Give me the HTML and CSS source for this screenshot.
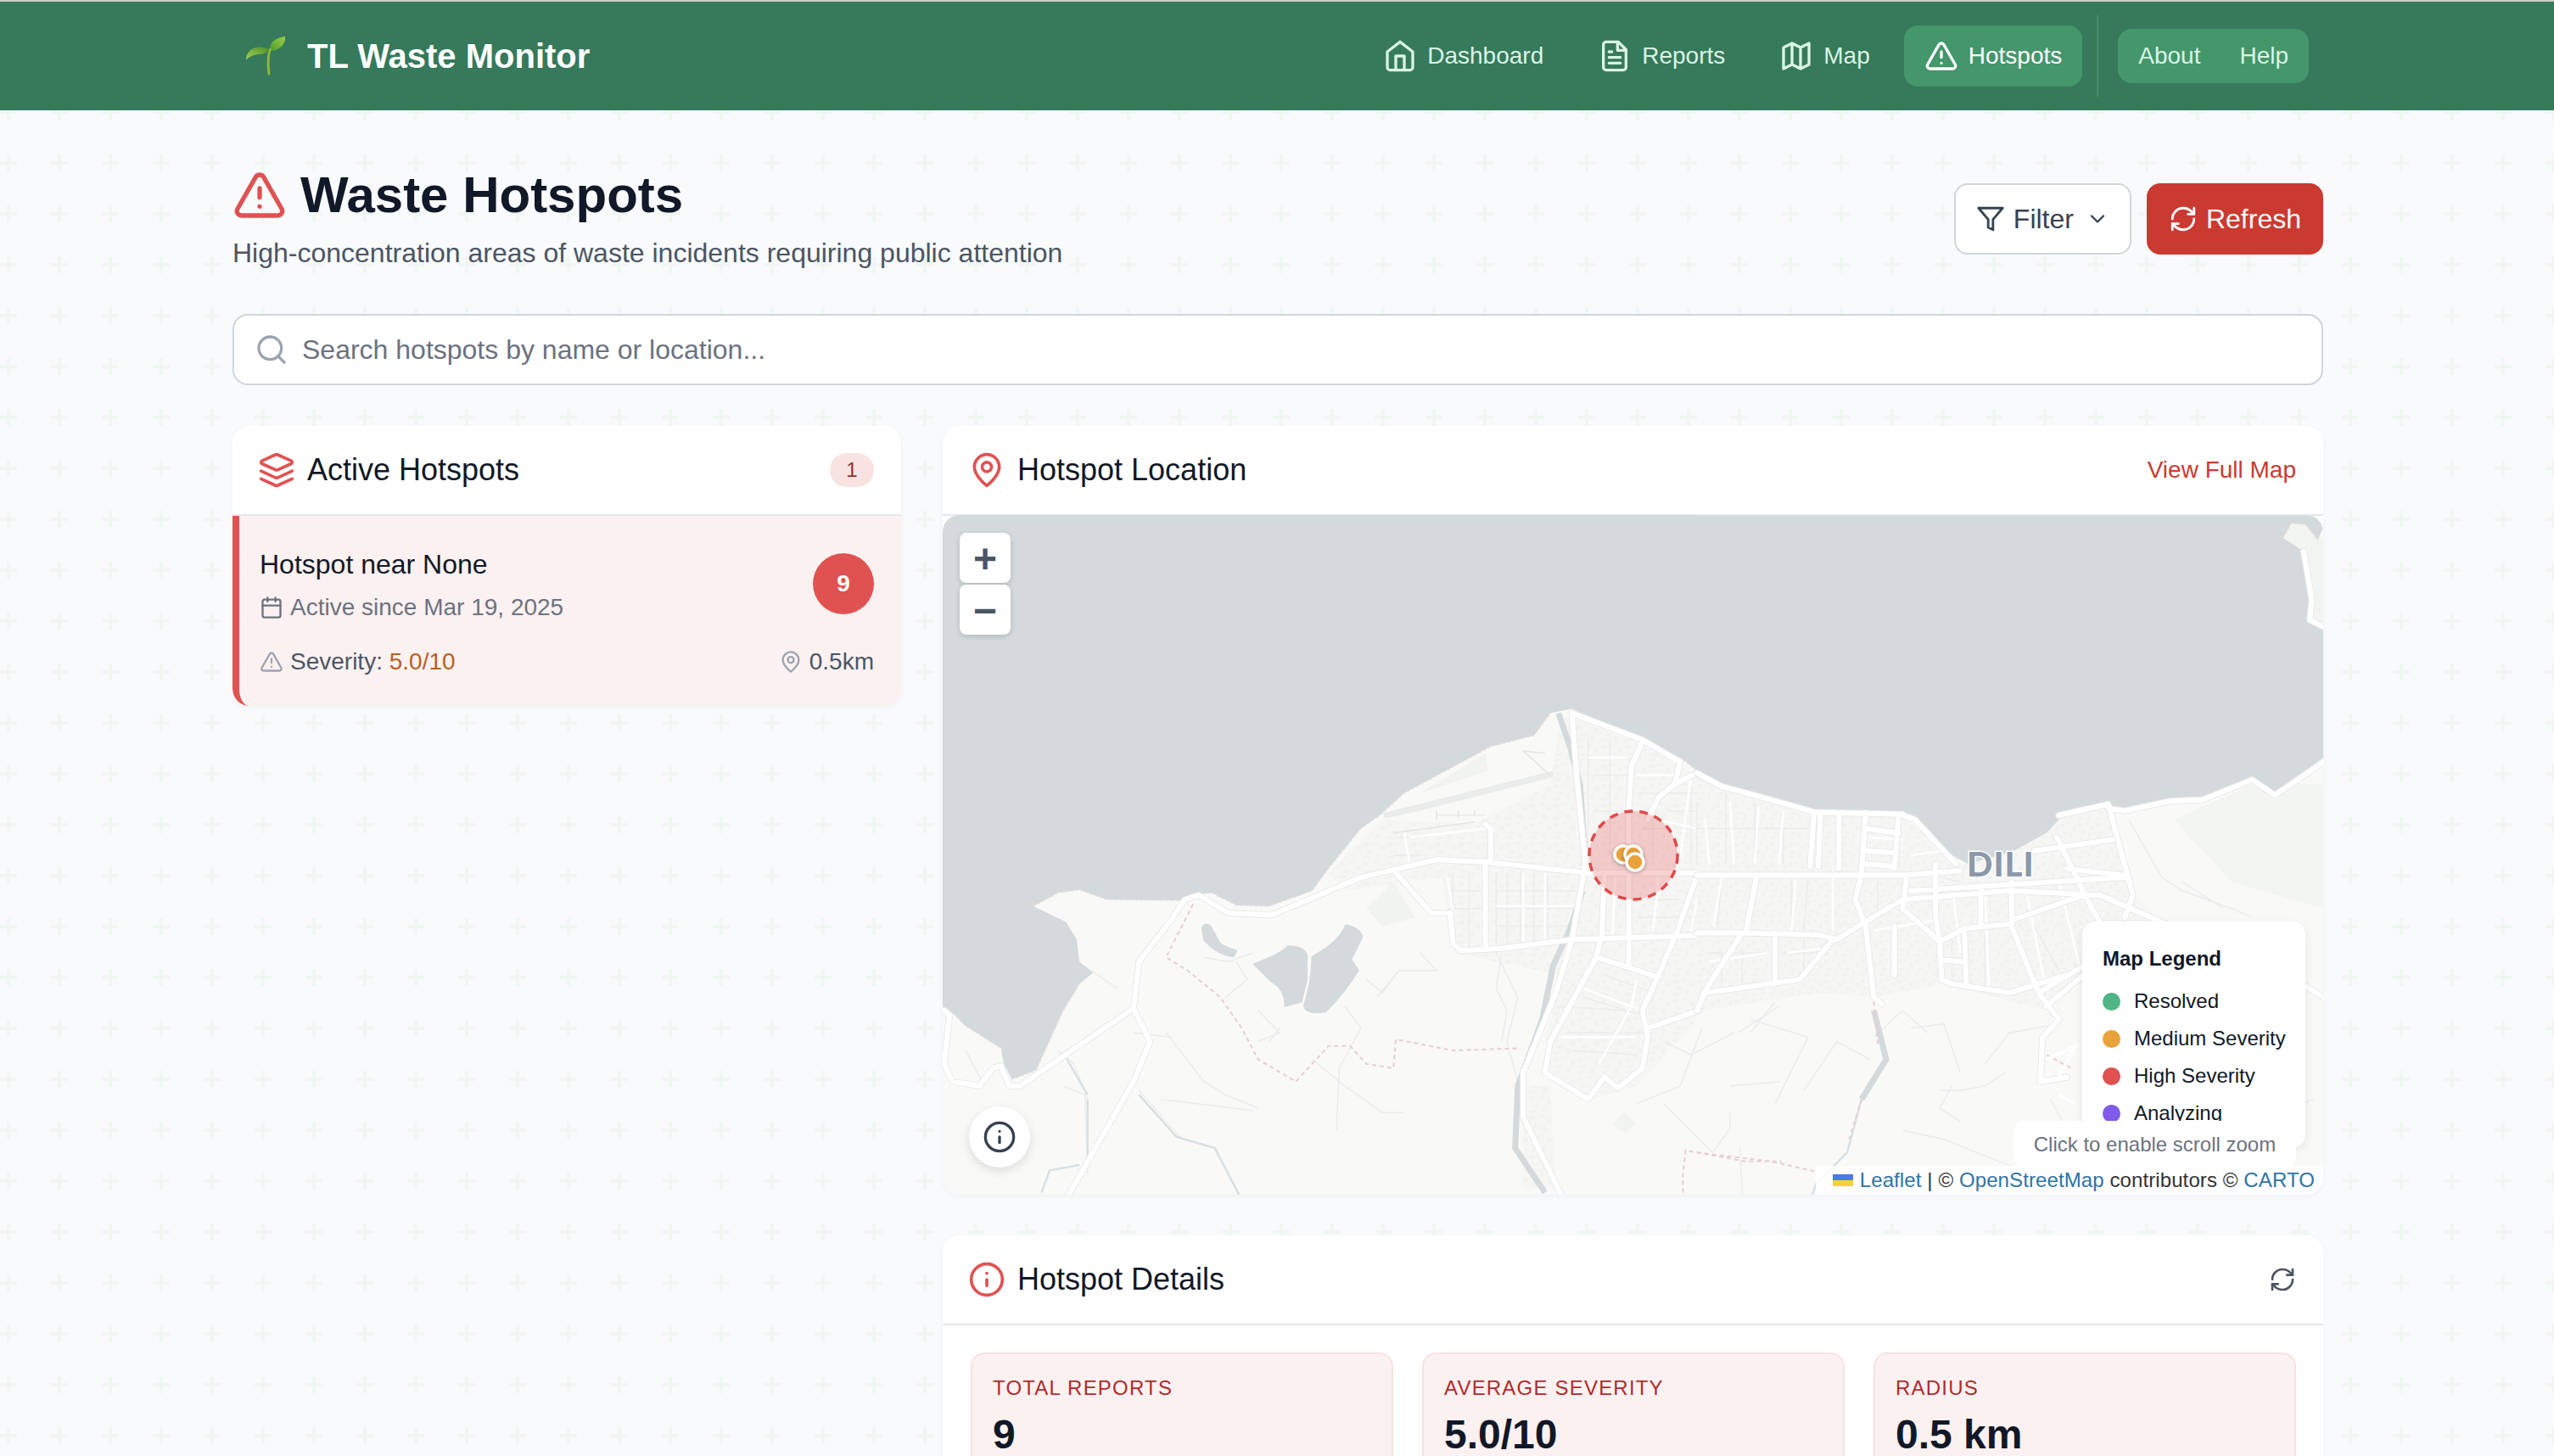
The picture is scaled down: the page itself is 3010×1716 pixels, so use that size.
FILE: index.html
```html
<!DOCTYPE html>
<html lang="en">
<head>
<meta charset="utf-8">
<title>Waste Hotspots</title>
<link rel="stylesheet" href="styles.css">
</head>
<body>
<svg class="sprite" aria-hidden="true">
  <defs>
    <symbol id="i-home" viewBox="0 0 24 24"><path d="m3 9 9-7 9 7v11a2 2 0 0 1-2 2H5a2 2 0 0 1-2-2z"/><path d="M9 22V12h6v10"/></symbol>
    <symbol id="i-file" viewBox="0 0 24 24"><path d="M14.5 2H6a2 2 0 0 0-2 2v16a2 2 0 0 0 2 2h12a2 2 0 0 0 2-2V7.5L14.5 2z"/><path d="M14 2v6h6M16 13H8M16 17H8M10 9H8"/></symbol>
    <symbol id="i-map" viewBox="0 0 24 24"><path d="M3 6l6-3 6 3 6-3v15l-6 3-6-3-6 3zM9 3v15M15 6v15"/></symbol>
    <symbol id="i-alert" viewBox="0 0 24 24"><path d="m21.73 18-8-14a2 2 0 0 0-3.48 0l-8 14A2 2 0 0 0 4 21h16a2 2 0 0 0 1.73-3Z"/><path d="M12 9v4M12 17h.01"/></symbol>
    <symbol id="i-filter" viewBox="0 0 24 24"><path d="M22 3H2l8 9.46V19l4 2v-8.54z"/></symbol>
    <symbol id="i-chev" viewBox="0 0 24 24"><path d="m6 9 6 6 6-6"/></symbol>
    <symbol id="i-refresh" viewBox="0 0 24 24"><path d="M3 12a9 9 0 0 1 9-9 9.75 9.75 0 0 1 6.74 2.74L21 8"/><path d="M21 3v5h-5"/><path d="M21 12a9 9 0 0 1-9 9 9.75 9.75 0 0 1-6.74-2.74L3 16"/><path d="M8 16H3v5"/></symbol>
    <symbol id="i-search" viewBox="0 0 24 24"><circle cx="11" cy="11" r="8"/><path d="m21 21-4.3-4.3"/></symbol>
    <symbol id="i-layers" viewBox="0 0 24 24"><path d="M12.83 2.18a2 2 0 0 0-1.66 0L2.6 6.08a1 1 0 0 0 0 1.83l8.58 3.91a2 2 0 0 0 1.66 0l8.58-3.9a1 1 0 0 0 0-1.83Z"/><path d="m22 17.65-9.17 4.16a2 2 0 0 1-1.66 0L2 17.65"/><path d="m22 12.65-9.17 4.16a2 2 0 0 1-1.66 0L2 12.65"/></symbol>
    <symbol id="i-pin" viewBox="0 0 24 24"><path d="M20 10c0 6-8 12-8 12s-8-6-8-12a8 8 0 0 1 16 0Z"/><circle cx="12" cy="10" r="3"/></symbol>
    <symbol id="i-cal" viewBox="0 0 24 24"><rect x="3" y="4" width="18" height="18" rx="2"/><path d="M16 2v4M8 2v4M3 10h18"/></symbol>
    <symbol id="i-info" viewBox="0 0 24 24"><circle cx="12" cy="12" r="10"/><path d="M12 16v-4M12 8h.01"/></symbol>
  </defs>
</svg>

<header class="nav">
  <div class="brand">
    <svg class="sprout" viewBox="0 0 48 46">
      <defs>
        <linearGradient id="leafA" x1="0" y1="1" x2="1" y2="0"><stop offset="0" stop-color="#4f9a2a"/><stop offset="1" stop-color="#9ad04a"/></linearGradient>
        <linearGradient id="leafB" x1="0" y1="1" x2="1" y2="0"><stop offset="0" stop-color="#a8d456"/><stop offset="1" stop-color="#4c8f28"/></linearGradient>
      </defs>
      <path class="sprout-stem" d="M27 44C26 36 26 26 27 20 28 15 30 13 33 11"/>
      <path fill="url(#leafA)" d="M46 0C38 1 30 5 29 10 28 13 30 16 32 17 40 15 47 9 46 0Z"/>
      <path fill="url(#leafB)" d="M0 28C0 20 5 14 12 13 18 12 23 13 27 15 25 19 20 21 14 21 8 22 3 24 0 28Z"/>
    </svg>
    <span class="brand-name">TL Waste Monitor</span>
  </div>
  <nav class="nav-right">
    <a class="nav-item"><svg class="ic ic-nav"><use href="#i-home"/></svg>Dashboard</a>
    <a class="nav-item"><svg class="ic ic-nav"><use href="#i-file"/></svg>Reports</a>
    <a class="nav-item"><svg class="ic ic-nav"><use href="#i-map"/></svg>Map</a>
    <a class="nav-item nav-active"><svg class="ic ic-nav"><use href="#i-alert"/></svg>Hotspots</a>
    <span class="nav-divider"></span>
    <div class="nav-group"><a>About</a><a>Help</a></div>
  </nav>
</header>

<main class="page">
  <section class="page-head">
    <div>
      <h1 class="page-title"><svg class="ic ic-title"><use href="#i-alert"/></svg>Waste Hotspots</h1>
      <p class="page-sub">High-concentration areas of waste incidents requiring public attention</p>
    </div>
    <div class="actions">
      <button class="btn btn-filter"><svg class="ic ic-btn"><use href="#i-filter"/></svg>Filter<svg class="ic ic-chev"><use href="#i-chev"/></svg></button>
      <button class="btn btn-refresh"><svg class="ic ic-btn"><use href="#i-refresh"/></svg>Refresh</button>
    </div>
  </section>

  <div class="search"><svg class="ic ic-search"><use href="#i-search"/></svg><span>Search hotspots by name or location...</span></div>

  <div class="columns">
    <aside class="card side">
      <div class="card-head">
        <h2 class="card-title"><svg class="ic ic-head"><use href="#i-layers"/></svg>Active Hotspots</h2>
        <span class="count">1</span>
      </div>
      <article class="hotspot">
        <div class="hotspot-top">
          <div>
            <div class="hotspot-name">Hotspot near None</div>
            <div class="hotspot-meta"><svg class="ic ic-small"><use href="#i-cal"/></svg>Active since Mar 19, 2025</div>
          </div>
          <span class="hotspot-num">9</span>
        </div>
        <div class="hotspot-bottom">
          <span class="hotspot-stat"><svg class="ic ic-small ic-light"><use href="#i-alert"/></svg><span>Severity: <b class="sev">5.0/10</b></span></span>
          <span class="hotspot-stat"><svg class="ic ic-small ic-light"><use href="#i-pin"/></svg>0.5km</span>
        </div>
      </article>
    </aside>

    <div class="main-col">
      <section class="card">
        <div class="card-head">
          <h2 class="card-title"><svg class="ic ic-head"><use href="#i-pin"/></svg>Hotspot Location</h2>
          <a class="card-link">View Full Map</a>
        </div>
        <div class="map">
          <svg class="map-art" viewBox="1111 607 1627 801" preserveAspectRatio="none">
            <defs>
              <pattern id="town" width="44" height="44" patternUnits="userSpaceOnUse">
                <rect width="44" height="44" fill="#f6f6f5"/>
                <path d="M2 4h10v8H2zM20 2h8v5h-8zM34 10h8v10h-8zM8 22h12v6H8zM26 26h6v12h-6zM2 34h12v6H2z" fill="#f2f2f1"/>
              </pattern>
              <path id="roadsA" class="vec" d="M20 1130 30 1140 20 1250 35 1290 85 1300 110 1260 125 1255 140 1300 160 1300 370 1125M370 1125 380 1020 440 925 465 880 490 870 545 910 625 915 790 830 930 790 1020 795 1210 820 1568 820M370 1125 400 1200 370 1290 250 1545M855 820 920 910 955 910 960 980 975 995 1050 990 1180 970 1568 955M1020 795V990M1030 795V720L1020 710M1180 460 1190 620 1205 800 1180 970 1150 1090 1090 1270 1090 1370 1160 1545M1180 460 1310 520 1380 570 1370 620 1340 650 1320 700M1310 525 1290 580 1285 680V1030M1240 830 1235 960 1225 1010 1140 1200 1130 1270 1210 1330 1240 1280 1265 1305 1310 1260 1320 1190 1310 1130 1340 1050 1375 950 1410 830M1225 1010 1340 1055M1520 820 1500 950 1430 1080 1415 1130 1320 1170M1420 1090 1568 1070M1370 620 1410 595 1460 620 1568 660M1500 950 1560 955V1075"/>
              <path id="roadsB" class="vec" d="M0 825 500 825 640 815M285 683 275 805M300 690 295 805M345 685V810M410 685 400 820 385 880 410 940 430 1100 450 1115M490 690 480 810M500 690 530 700 630 800M0 955 110 955 300 960 340 970 400 935 500 880 760 860 980 870 1140 935M20 1090 250 1060 330 970M110 955 20 1085 0 1130M145 825 120 950M190 955V1065M510 825 500 900 590 975 595 1060 620 1070 760 1090 900 1050M580 800V920L590 975 650 945 760 935M650 950 655 1075M765 840V940L830 1090 880 1150 840 1190 835 1290 900 1280M875 740 960 900 1000 960M880 690 1000 665 1060 870 1040 920M820 770 1010 745M900 810 1035 825M770 925 940 870M480 940V1050M590 1015 645 1020M1000 675 1040 680 1150 658 1230 655 1350 610 1405 645 1523 570M1523 265 1490 250 1495 205 1475 95M1480 1075 1523 1100M0 595 60 625 180 655 285 683 500 688M410 720 490 730M410 770 480 775M410 800 480 805M520 860 1040 830M830 1090 940 1030M850 1120 940 1050M690 860V940"/>
            </defs>
            <rect x="1111" y="607" width="1627" height="801" fill="#f9f9f8"/>

            <g transform="translate(1100 600) scale(.6378 .523)">
              <path fill="#f0f3ef" d="M900 640 1020 550 1025 590ZM800 900 850 840 890 920 830 940ZM1255 1385 1278 1360 1298 1385 1278 1405Z"/>
              <path fill="url(#town)" d="M1180 470 1310 530 1411 600V1150L1300 1300 1220 1330 1140 1280 1130 1200 1160 1050 960 1000 940 830 760 860 730 820 830 700 1000 710 1140 620 1160 470ZM1090 1300 1140 1300 1150 1530 1090 1530Z"/>
              <path class="thin" d="M1050 1000 1040 1080 1060 1130 1050 1200M800 1060 830 1090 860 1040M760 1120 790 1170 750 1260 745 1400M640 1170 620 1200M540 1100 580 1060 560 1020M500 1010 545 1020 590 1000M1170 1180 1320 1180M1150 1120 1280 1130M240 1300 280 1320 285 1500M380 1310 460 1420 520 1440 565 1545M200 1540 215 1490 270 1480M370 1180 440 1190M280 1030 340 1080M230 1220 260 1250 285 1330M420 1330 590 1355M1300 1340 1380 1300 1420 1170M1490 1440 1495 1545M1040 1000 1080 1100 1060 1200 1080 1290M900 1000 930 1040 860 1040 820 1100M600 1130 640 1180 600 1200M700 1240 760 1300 830 1360 870 1360M430 1180 500 1290 540 1320 600 1350M60 1220 90 1290M1350 1200 1400 1230 1480 1180M1350 1340 1440 1450 1470 1400"/>
              <path class="urban-grid" d="M1040 820V980M1060 820V985M1085 815V985M1110 820V980M1135 825V975M1040 860H1190M1040 900H1190M1040 940H1180M960 820V980M990 820V990M950 860H1020M950 900H1020M1210 520V790M1250 520V780M1330 700V800M1400 640V800M1450 640V800M1500 670V800M1360 680H1568M1300 640H1500M1310 720H1500M1220 600H1290M1220 680H1290M1410 880H1500M1390 920H1500M1300 880 1380 880M1300 920 1380 920M1240 1050 1330 1090M1200 1100 1310 1140M1180 1220 1300 1230M1470 1000 1530 1040M1450 1050 1540 1000M850 740H900M850 780H900M930 690H1020"/>
              <path class="minor" d="M1210 560 1280 560M1300 600 1380 600M1340 700 1410 720M1400 600 1380 790M1450 640 1430 810M1510 680 1490 810M1260 830 1255 960M1340 830 1330 950M1420 830 1400 950M1300 1060 1290 1120 1230 1250M1200 1080 1310 1130M1160 1190 1300 1190M1480 960 1440 1060M1540 960V1070M950 830 960 910M1090 820V975M1130 820V975M1040 895H1185M880 740 1020 720M880 800 870 730"/>
              <path fill="#eaebeb" d="M830 685 1145 590 1145 604 890 682 835 697Z"/>
              <path class="runway" d="M930 680V700M970 680V695M1000 680V690M1130 550 1090 545 1140 600M850 730 1000 705"/>
              <path class="sea" d="M17 0V1125L35 1135 60 1165 125 1215 130 1250 145 1285 190 1265 210 1210 240 1130 270 1070 295 1045 270 1020 265 970 245 930 185 895 230 865 270 858 320 880 460 882 485 868 515 865 560 893 620 895 700 860 730 810 790 720 825 690 870 640 1030 535 1110 510 1140 460 1180 450 1310 520 1380 560 1412 590V0Z"/>
              <path class="lake" d="M497 945Q500 930 512 940L530 980Q545 990 560 995L555 1008Q525 1005 500 970ZM592 1025Q640 1005 655 985 685 985 690 1005L690 1060 680 1110 650 1120Q650 1080 625 1065ZM705 1005Q750 975 762 938 790 945 792 965L772 1015 785 1040Q760 1090 725 1132 690 1140 685 1120 700 1060 700 1010Z"/>
              <path class="river" d="M1155 460 1175 530 1195 620 1205 790M1200 860 1175 950 1145 1030 1125 1150 1080 1300 1075 1440 1130 1540"/>
              <path class="river-thin" d="M200 1540 215 1490 270 1478M285 1330V1480M380 1320 450 1415 520 1440 565 1545M240 1225 285 1320"/>
              <path class="coast" d="M35 1135 60 1165 125 1215M145 1285 190 1265 210 1210 240 1130 270 1070M185 895 230 865 270 858 320 880 460 882M515 865 560 893 620 895 700 860 730 810 790 720 825 690 870 640 1030 535 1110 510 1140 460M1180 450 1310 520 1380 560 1412 590"/>
              <path class="border" d="M480 890 430 1010 470 1040 530 1100 570 1170 600 1240 670 1290 730 1210 770 1210 800 1250 850 1260 855 1195 960 1220 1085 1215M1385 1540 1385 1500 1390 1445 1500 1470 1568 1470"/>
              <use href="#roadsA" class="road-case"/>
              <use href="#roadsA" class="road"/>
            </g>

            <g transform="translate(2000 600) scale(.4847 .523)">
              <path fill="#f3f5f2" d="M1160 700 1350 620 1523 620V900L1300 840Z"/>
              <path fill="#f2f4f1" d="M1425 65 1445 32 1480 35 1523 70V265L1490 250 1495 205 1475 95Z"/>
              <path fill="url(#town)" d="M0 590 285 690 500 690 640 800 890 690 1000 670 1060 870 1140 940 900 1090 850 1130 600 1070 430 1100 300 1090 0 1130Z"/>
              <path class="thin" d="M1050 700 1130 830 1180 860 1300 900 1350 920M1180 840 1280 900M430 1190 500 1130 560 1180M130 1180 190 1110M130 1150 270 1190 190 1340M260 1310 340 1200 420 1240M590 1310 640 1310 700 1300 750 1270M620 1300 590 1350 640 1380M80 1400V1360M500 1400 600 1420 760 1480M860 1330 900 1400M950 1080 1100 1140 1200 1230M700 1250 760 1180 880 1160M100 1180 200 1120M520 1170 600 1160 640 1270M1000 1130 1100 1200 1300 1280M950 1300 1100 1400M1100 1300 1300 1400 1500 1330M80 1300 200 1290"/>
              <path class="urban-grid" d="M60 830 50 940M230 830V950M270 830 260 950M330 840V940M440 840V920M590 830 640 840M0 720H280M0 660V800M70 640V800M140 660V800M210 680V800M30 1000H170M60 1000V1080M110 990V1070M210 1000H320M260 970V1050M620 970V1060M700 960V1080M820 940 880 1040"/>
              <path class="minor" d="M60 830 40 940M240 835 230 950M330 830V950M20 700 30 800M80 660 90 800M150 670 140 800M210 680 200 800M30 1020 170 1000M220 1000 310 990M430 950 590 925M620 850 640 1000M700 860 710 1080M800 860 850 1090M880 840 930 1030M520 780 600 770M420 740 500 745"/>
              <path class="sea" d="M0 14V590L60 622 180 655 285 683 500 688 540 710 620 780 660 800 770 770 850 730 890 690 1000 665 1040 680 1150 658 1230 655 1350 610 1405 640 1523 560V265L1490 255 1495 205 1475 95 1425 65 1445 32 1480 35 1510 70 1523 40V14Z"/>
              <path class="river" d="M430 1130 460 1240 400 1330"/>
              <path class="river-thin" d="M400 1330 365 1450 290 1520 280 1545"/>
              <path class="coast" d="M1425 65 1445 32 1480 35 1510 70"/>
              <path class="border" d="M0 1450 180 1470 300 1495M430 1110 440 1210M400 1330 370 1420M850 1230 910 1260"/>
              <use href="#roadsB" class="road-case"/>
              <use href="#roadsB" class="road"/>
              <path class="road-bend" d="M850 1240 920 1210 880 1280M880 1320 920 1340"/>
            </g>

            <text class="map-label" x="2318" y="1033">DILI</text>

            <circle class="zone" cx="1925" cy="1008" r="52"/>
            <circle class="mk" cx="1913" cy="1007" r="10"/>
            <circle class="mk" cx="1925" cy="1007" r="10"/>
            <circle class="mk" cx="1927" cy="1016" r="10"/>
          </svg>

          <div class="zoom-ctl">
            <button class="zoom-btn">+</button>
            <button class="zoom-btn">−</button>
          </div>
          <button class="info-btn"><svg class="ic ic-info"><use href="#i-info"/></svg></button>

          <div class="legend">
            <div class="legend-title">Map Legend</div>
            <div class="legend-row"><i class="dot dot-green"></i>Resolved</div>
            <div class="legend-row"><i class="dot dot-orange"></i>Medium Severity</div>
            <div class="legend-row"><i class="dot dot-red"></i>High Severity</div>
            <div class="legend-row"><i class="dot dot-purple"></i>Analyzing</div>
          </div>
          <div class="scroll-hint">Click to enable scroll zoom</div>
          <div class="attrib"><svg class="flag" viewBox="0 0 24 14"><rect width="24" height="7" fill="#4c7be0"/><rect y="7" width="24" height="7" fill="#f5cf3c"/></svg><a>Leaflet</a> | © <a>OpenStreetMap</a> contributors © <a>CARTO</a></div>
        </div>
      </section>

      <section class="card details">
        <div class="card-head">
          <h2 class="card-title"><svg class="ic ic-head"><use href="#i-info"/></svg>Hotspot Details</h2>
          <svg class="ic ic-reload"><use href="#i-refresh"/></svg>
        </div>
        <div class="stats">
          <div class="stat"><div class="stat-label">TOTAL REPORTS</div><div class="stat-value">9</div></div>
          <div class="stat"><div class="stat-label">AVERAGE SEVERITY</div><div class="stat-value">5.0/10</div></div>
          <div class="stat"><div class="stat-label">RADIUS</div><div class="stat-value">0.5 km</div></div>
        </div>
      </section>
    </div>
  </div>
</main>
</body>
</html>
```
FILE: styles.css
```css
* { box-sizing: border-box; }
html, body { margin: 0; padding: 0; }
body {
  width: 3010px;
  height: 1716px;
  overflow: hidden;
  font-family: "Liberation Sans", Arial, sans-serif;
  color: #111827;
  background-color: #f8fafc;
  background-image: url("data:image/svg+xml,%3Csvg xmlns='http://www.w3.org/2000/svg' width='60' height='60'%3E%3Cpath d='M8 2h4v8h8v4h-8v8H8v-8H0v-4h8z' fill='%23f0f7f3' transform='translate(20 18)'/%3E%3C/svg%3E");
  background-position: -20px -18px;
}
h1, h2, p { margin: 0; }
button { font-family: inherit; }
.sprite { position: absolute; width: 0; height: 0; }
.ic { fill: none; stroke: currentColor; stroke-width: 2; stroke-linecap: round; stroke-linejoin: round; flex: none; }

/* nav */
.nav {
  height: 130px;
  background: #36795b;
  border-top: 2px solid #c9cdc9;
  display: flex;
  align-items: center;
  justify-content: space-between;
  padding: 0 289px 0 290px;
}
.brand { display: flex; align-items: center; gap: 24px; }
.sprout { width: 48px; height: 46px; }
.sprout-stem { fill: none; stroke: #8ab83a; stroke-width: 3; stroke-linecap: round; }
.brand-name { font-size: 40px; font-weight: 700; color: #fff; }
.nav-right { display: flex; align-items: center; gap: 16px; color: #d9f5e5; font-size: 28px; }
.nav-item { display: flex; align-items: center; gap: 12px; height: 72px; padding: 0 24px; border-radius: 16px; }
.nav-active { background: #44966b; color: #fff; }
.ic-nav { width: 40px; height: 40px; }
.nav-divider { width: 2px; height: 96px; background: #4a8a6c; margin: 0 7px 0 1px; }
.nav-group { display: flex; align-items: center; gap: 46px; height: 64px; padding: 0 24px; border-radius: 16px; background: #44966b; }

/* page */
.page { width: 2464px; margin-left: 274px; padding-top: 86px; }
.page-head { display: flex; justify-content: space-between; align-items: flex-start; }
.page-title { display: flex; align-items: center; gap: 18px; font-size: 60px; font-weight: 700; line-height: 36px; height: 52px; margin-top: -12px; color: #111827; }
.ic-title { width: 64px; height: 64px; color: #e05252; margin-right: -2px; }
.page-sub { font-size: 32px; line-height: 48px; color: #4b5563; margin-top: 18px; }
.actions { display: flex; gap: 18px; }
.btn { display: flex; align-items: center; gap: 10px; height: 84px; border-radius: 16px; font-size: 32px; border: 2px solid #d1d5db; padding: 0 24px; }
.btn-filter { background: #fff; color: #374151; }
.btn-refresh { background: #cb3a31; border-color: #cb3a31; color: #fff; }
.ic-btn { width: 34px; height: 34px; }
.ic-chev { width: 28px; height: 28px; margin-left: 4px; }

.search {
  display: flex; align-items: center; gap: 16px;
  height: 84px; margin-top: 48px; padding: 0 24px;
  background: #fff; border: 2px solid #d1d5db; border-radius: 18px;
  font-size: 32px; color: #6b7280;
}
.ic-search { width: 40px; height: 40px; color: #9ca3af; }

.columns { display: grid; grid-template-columns: 788px 1627px; column-gap: 49px; margin-top: 48px; align-items: start; }
.card { background: #fff; border-radius: 20px; overflow: hidden; box-shadow: 0 2px 6px rgba(17, 24, 39, .04); }
.card-head { height: 106px; display: flex; align-items: center; justify-content: space-between; padding: 0 32px; border-bottom: 2px solid #e5e7eb; }
.card-title { display: flex; align-items: center; gap: 14px; font-size: 36px; font-weight: 400; color: #111827; }
.ic-head { width: 44px; height: 44px; color: #e05252; margin-left: -2px; }
.count { width: 52px; height: 40px; border-radius: 20px; background: #f8e2e2; color: #9b2c2c; font-size: 24px; display: flex; align-items: center; justify-content: center; }
.card-link { font-size: 28px; color: #cb3a31; }

.hotspot { height: 224px; background: #fcf1f1; border-left: 8px solid #e05252; padding: 36px 32px 0 24px; border-radius: 0 0 20px 20px; }
.hotspot-top { display: flex; justify-content: space-between; align-items: flex-start; }
.hotspot-name { font-size: 32px; line-height: 42px; color: #111827; }
.hotspot-meta { display: flex; align-items: center; gap: 8px; margin-top: 10px; font-size: 28px; line-height: 40px; color: #6b7280; }
.ic-small { width: 28px; height: 28px; }
.ic-light { color: #9ca3af; }
.hotspot-num { width: 72px; height: 72px; margin-top: 8px; border-radius: 50%; background: #e05252; color: #fff; font-size: 28px; font-weight: 700; display: flex; align-items: center; justify-content: center; }
.hotspot-bottom { display: flex; justify-content: space-between; margin-top: 24px; font-size: 28px; line-height: 40px; color: #4b5563; }
.hotspot-stat { display: flex; align-items: center; gap: 8px; }
.sev { font-weight: 400; color: #b7601e; }

.main-col { display: flex; flex-direction: column; gap: 48px; }

/* map */
.map { position: relative; height: 801px; border-radius: 20px; overflow: hidden; margin-top: -1px; background: #f9f9f8; }
.map-art { position: absolute; inset: 0; width: 100%; height: 100%; display: block; }
.vec { vector-effect: non-scaling-stroke; fill: none; stroke-linejoin: round; stroke-linecap: round; }
.road-case { stroke: #e9eaea; stroke-width: 8; }
.road { stroke: #ffffff; stroke-width: 6; }
.road-bend { fill: none; stroke: #fff; stroke-width: 4; vector-effect: non-scaling-stroke; }
.minor { fill: none; stroke: #fff; stroke-width: 2.5; vector-effect: non-scaling-stroke; }
.thin { fill: none; stroke: #ebecec; stroke-width: 1.5; vector-effect: non-scaling-stroke; }
.urban-grid { fill: none; stroke: #ececec; stroke-width: 1.5; vector-effect: non-scaling-stroke; }
.runway { fill: none; stroke: #e3e4e4; stroke-width: 1.5; vector-effect: non-scaling-stroke; }
.sea { fill: #d4dadc; }
.lake { fill: #d4dadc; stroke: #d4dadc; stroke-width: 2; stroke-linejoin: round; vector-effect: non-scaling-stroke; }
.river { fill: none; stroke: #d4dadc; stroke-width: 7; vector-effect: non-scaling-stroke; }
.river-thin { fill: none; stroke: #d9dfe1; stroke-width: 2.5; vector-effect: non-scaling-stroke; }
.coast { fill: none; stroke: #e9dcdc; stroke-width: 1.5; stroke-dasharray: 3 3; vector-effect: non-scaling-stroke; }
.border { fill: none; stroke: #e6cfd2; stroke-width: 2; stroke-dasharray: 5 4; vector-effect: non-scaling-stroke; }
.map-label { font-family: Lato, sans-serif; font-size: 40px; font-weight: 900; letter-spacing: 1px; fill: #8c99a9; stroke: #fff; stroke-width: 3px; paint-order: stroke; }
.zone { fill: rgba(224, 62, 62, .24); stroke: #e04a4a; stroke-width: 3.5; stroke-dasharray: 10 8; }
.mk { fill: #e9a23b; stroke: #fff; stroke-width: 3.5; filter: drop-shadow(0 1px 2px rgba(0, 0, 0, .3)); }

.zoom-ctl { position: absolute; left: 20px; top: 21px; display: flex; flex-direction: column; gap: 2px; }
.zoom-btn { width: 60px; height: 59px; border: 0; border-radius: 8px; background: #fff; color: #4b5563; font-size: 48px; font-weight: 700; line-height: 1; padding: 2px 0 0; box-shadow: 0 2px 6px rgba(0, 0, 0, .16); }
.info-btn { position: absolute; left: 31px; bottom: 32px; width: 72px; height: 72px; border: 0; border-radius: 50%; background: #fff; color: #374151; display: flex; align-items: center; justify-content: center; box-shadow: 0 4px 12px rgba(0, 0, 0, .12); }
.ic-info { width: 40px; height: 40px; }

.legend { position: absolute; left: 1343px; top: 479px; width: 263px; height: 267px; padding: 28px 24px; border-radius: 16px; background: #fff; box-shadow: 0 4px 12px rgba(0, 0, 0, .08); font-size: 24px; color: #111827; overflow: hidden; }
.legend-title { font-weight: 700; line-height: 32px; margin-bottom: 12px; }
.legend-row { display: flex; align-items: center; gap: 16px; height: 44px; white-space: nowrap; }
.dot { width: 21px; height: 21px; border-radius: 50%; flex: none; }
.dot-green { background: #4fb585; }
.dot-orange { background: #e9a23b; }
.dot-red { background: #e05252; }
.dot-purple { background: #805ae8; }
.scroll-hint { position: absolute; left: 1262px; top: 714px; width: 333px; height: 55px; border-radius: 14px; background: #fff; color: #6b7280; font-size: 24px; display: flex; align-items: center; justify-content: center; white-space: nowrap; }
.attrib { position: absolute; right: 0; bottom: 0; height: 34px; padding: 0 10px 0 20px; background: rgba(255, 255, 255, .85); font-size: 24px; letter-spacing: .1px; color: #333; display: flex; align-items: center; white-space: pre; }
.attrib a { color: #2f74a8; }
.flag { width: 24px; height: 14px; margin-right: 8px; }

.details { flex: none; }
.ic-reload { width: 32px; height: 32px; color: #4b5563; }
.stats { display: grid; grid-template-columns: repeat(3, 498px); column-gap: 34px; padding: 32px 33px; }
.stat { height: 200px; padding: 24px; border: 2px solid #f8e2e2; border-radius: 16px; background: #fcf1f1; }
.stat-label { font-size: 24px; line-height: 32px; letter-spacing: 1.2px; color: #b02a2a; }
.stat-value { margin-top: 15px; font-size: 48px; font-weight: 700; line-height: 48px; color: #111827; }
```
